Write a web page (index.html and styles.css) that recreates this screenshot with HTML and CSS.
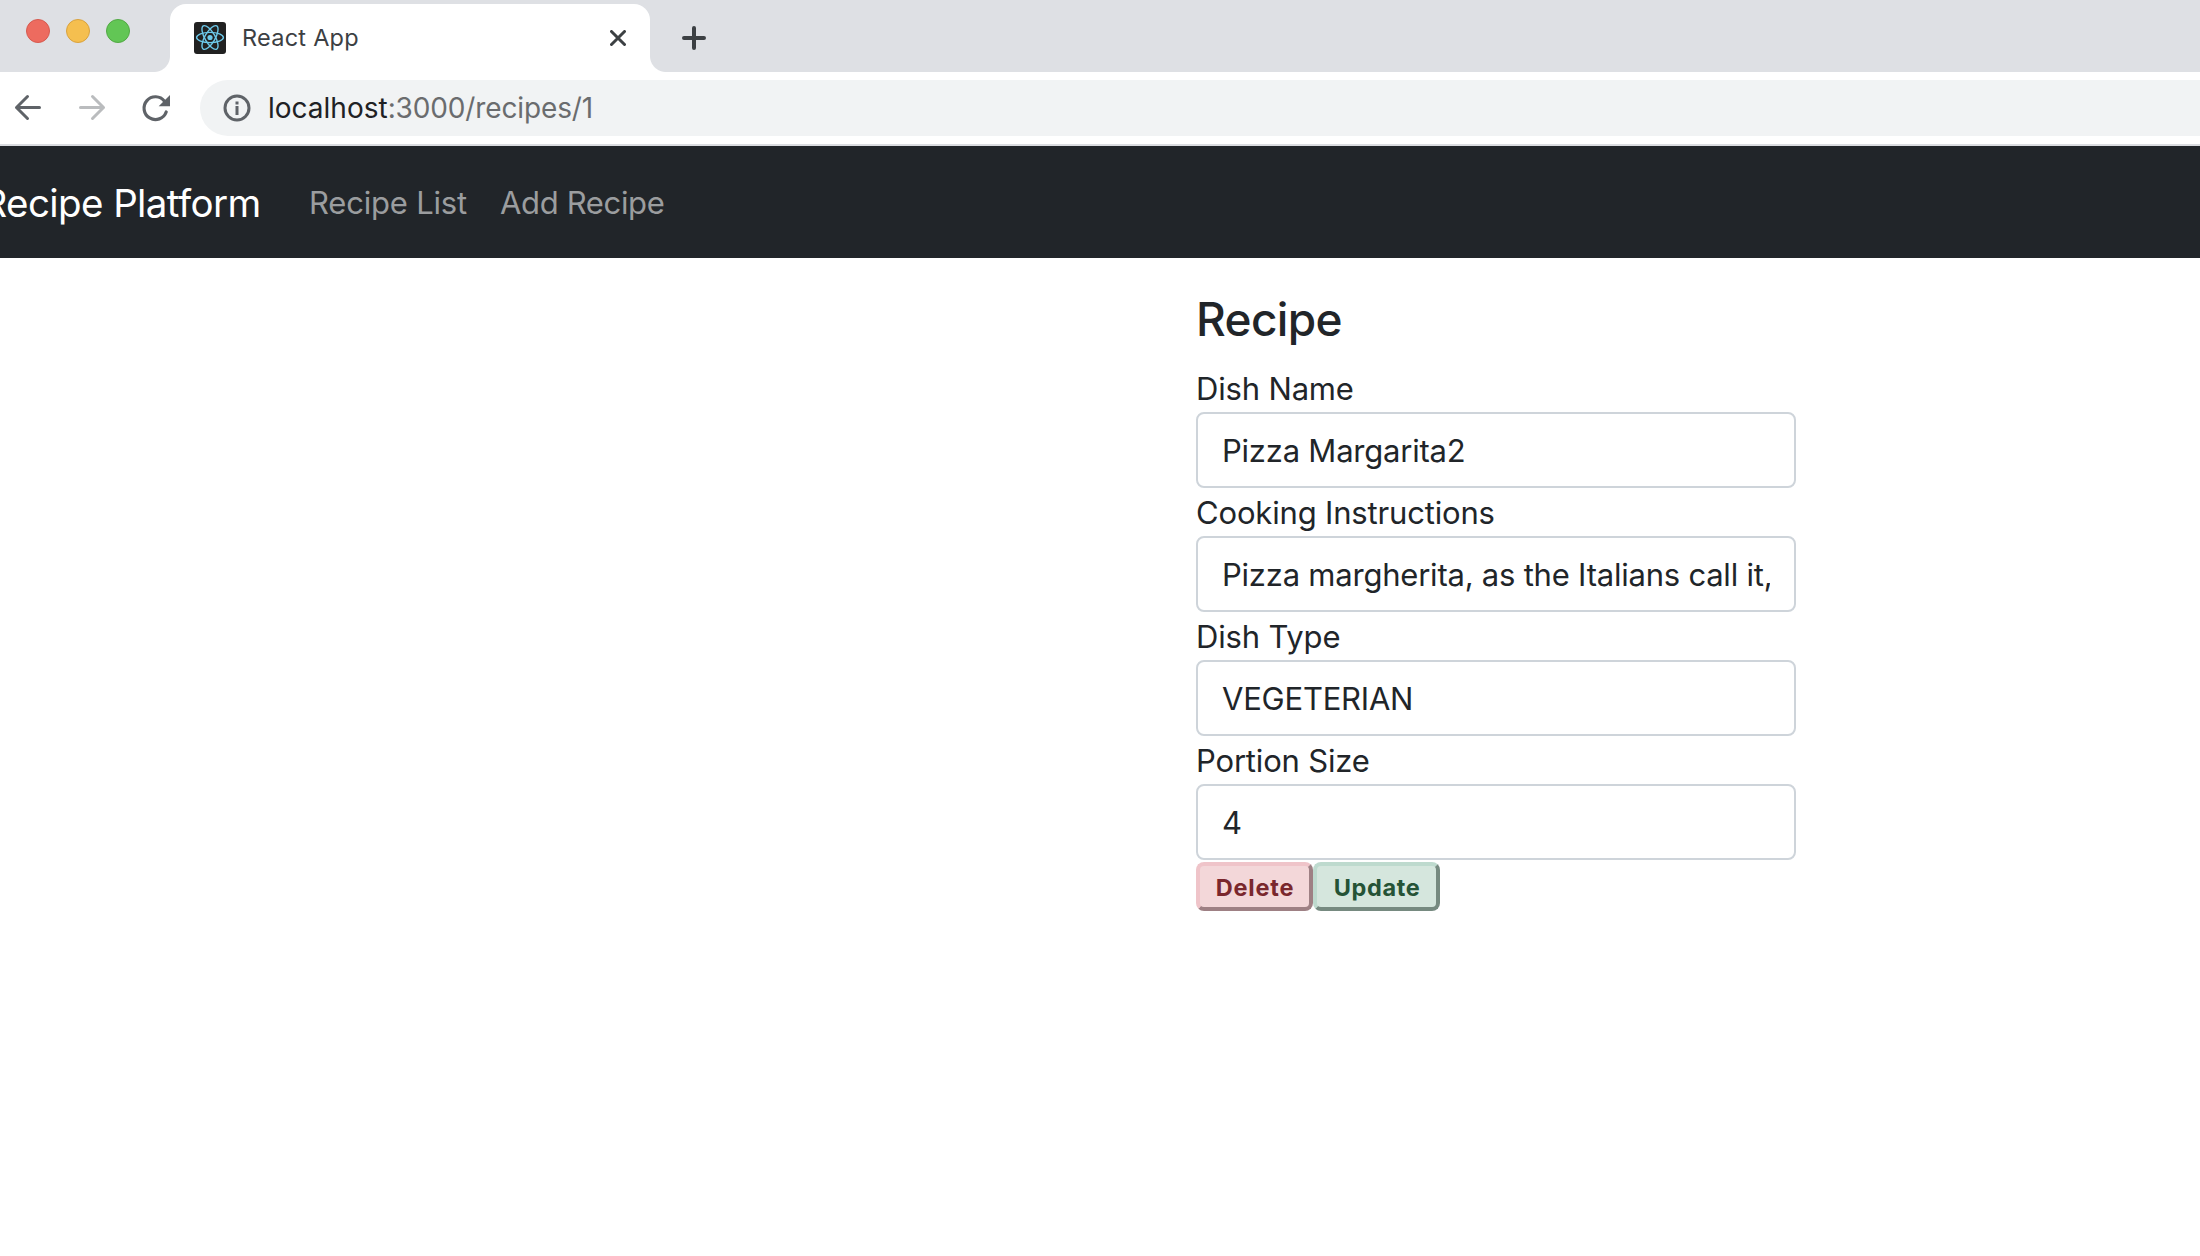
FILE: index.html
```html
<!DOCTYPE html>
<html lang="en">
<head>
<meta charset="utf-8">
<title>React App</title>
<link rel="stylesheet" href="styles.css">
</head>
<body>
<div class="tab-strip">
  <div class="lights"><span class="light red"></span><span class="light yellow"></span><span class="light green"></span></div>
  <div class="tab">
    <svg class="favicon" width="32" height="32" viewBox="0 0 32 32">
      <rect width="32" height="32" rx="3" fill="#212121"/>
      <g fill="none" stroke="#6cc9ea" stroke-width="1.4" transform="translate(16 15.5)">
        <ellipse rx="13.4" ry="5.1"/><ellipse rx="13.4" ry="5.1" transform="rotate(60)"/><ellipse rx="13.4" ry="5.1" transform="rotate(120)"/>
        <circle r="2.6" fill="#6cc9ea" stroke="none"/>
      </g>
    </svg>
    <span class="tab-title">React App</span>
    <svg class="close" width="16" height="16" viewBox="0 0 16 16"><path d="M1.5 1.5l13 13M14.5 1.5l-13 13" stroke="#3c4043" stroke-width="3" stroke-linecap="round"/></svg>
  </div>
  <svg class="plus" width="24" height="24" viewBox="0 0 24 24"><path d="M12 2v20M2 12h20" stroke="#3c4043" stroke-width="4" stroke-linecap="round"/></svg>
</div>
<div class="toolbar">
  <svg class="nav-icons" width="172" height="56" viewBox="0 80 172 56" fill="none" stroke-width="3" stroke-linecap="round" stroke-linejoin="round">
    <path d="M39.5 107.5H16.5M27.5 96.5l-11 11 11 11" stroke="#5f6368"/>
    <path d="M80.5 107.5H103.5M92.5 96.5l11 11-11 11" stroke="#babcbe"/>
    <path d="M164.5 101.2A11.4 11.4 0 1 0 166.2 112" stroke="#5f6368" stroke-width="3.2"/>
    <path d="M170 95v11.3h-11.3z" fill="#5f6368"/>
  </svg>
  <div class="address">
    <svg width="28" height="28" viewBox="0 0 28 28"><circle cx="14" cy="14" r="12" fill="none" stroke="#5f6368" stroke-width="3"/><path d="M14 12v9M14 7.5v3" stroke="#5f6368" stroke-width="3"/></svg>
    <span class="url"><span class="host">localhost</span>:3000/recipes/1</span>
  </div>
</div>
<nav class="navbar">
  <a class="brand">Recipe Platform</a>
  <a class="link">Recipe List</a>
  <a class="link add">Add Recipe</a>
</nav>
<main class="page">
  <form class="form">
    <h3 class="heading">Recipe</h3>
    <label class="label" for="name">Dish Name</label>
    <input class="field" id="name" value="Pizza Margarita2">
    <label class="label" for="cook">Cooking Instructions</label>
    <input class="field" id="cook" value="Pizza margherita, as the Italians call it,">
    <label class="label" for="type">Dish Type</label>
    <input class="field" id="type" value="VEGETERIAN">
    <label class="label" for="size">Portion Size</label>
    <input class="field" id="size" value="4">
    <div class="actions">
      <button class="btn delete" type="button">Delete</button><button class="btn update" type="button">Update</button>
    </div>
  </form>
</main>
</body>
</html>
```
FILE: styles.css
```css
* { box-sizing: border-box; }
html { overflow: hidden; }
body { margin: 0; height: 1256px; background: #fff; color: #212529; font-family: Inter, "Liberation Sans", sans-serif; overflow: hidden; }
svg { display: block; flex: none; }

.tab-strip { height: 72px; padding-top: 4px; background: #dee0e4; display: flex; }
.lights { width: 170px; padding: 15px 0 0 26px; display: flex; gap: 16px; flex: none; }
.light { width: 24px; height: 24px; border-radius: 50%; border: 1px solid; }
.red { background: #ed6b5f; border-color: #d65a4f; }
.yellow { background: #f5bf4f; border-color: #d9a23e; }
.green { background: #62c655; border-color: #52a944; }
.tab { position: relative; width: 480px; height: 68px; padding: 0 24px; background: #fff; border-radius: 16px 16px 0 0; display: flex; align-items: center; flex: none; }
.tab::before, .tab::after { content: ""; position: absolute; bottom: 0; width: 16px; height: 16px; }
.tab::before { left: -16px; background: radial-gradient(circle at 0 0, transparent 15.5px, #fff 16.5px); }
.tab::after { right: -16px; background: radial-gradient(circle at 100% 0, transparent 15.5px, #fff 16.5px); }
.tab-title { margin-left: 16px; padding-bottom: 2px; font-size: 23.5px; letter-spacing: .25px; color: #3c4043; }
.close { margin-left: auto; }
.plus { margin: 22px 0 0 32px; }

.toolbar { height: 74px; padding-top: 8px; border-bottom: 2px solid #dadce0; background: #fff; display: flex; }
.address { flex: 1; margin-left: 28px; height: 56px; padding-left: 22.5px; background: #f1f3f4; border-radius: 28px 0 0 28px; display: flex; align-items: center; }
.url { margin-left: 17.5px; font-size: 28px; letter-spacing: -.13px; color: #6a6c6e; }
.host { color: #202124; letter-spacing: 0; }

.navbar { height: 112px; background: #212529; display: flex; align-items: flex-start; padding-top: 33px; white-space: nowrap; }
.brand { margin-left: -17.5px; width: 326.5px; font-size: 38.5px; line-height: 48px; letter-spacing: -.6px; color: #fff; }
.link { width: 191px; font-size: 31px; line-height: 48px; letter-spacing: -.2px; color: #9b9d9f; }
.add { letter-spacing: -.35px; }

.page { padding: 32px 0 0 1196px; }
.form { width: 600px; }
.heading { margin: 0 0 16px; font-size: 46px; line-height: 58px; font-weight: 500; letter-spacing: -.65px; }
.label { display: block; padding-top: 2px; font-size: 31px; line-height: 46px; letter-spacing: -.17px; }
.field { display: block; width: 600px; height: 76px; padding: 0 24px; border: 2px solid #ced4da; border-radius: 8px; background: #fff; color: #212529; font: 31px Inter, "Liberation Sans", sans-serif; letter-spacing: -.22px; outline: 0; }
.actions { display: flex; padding-top: 2px; }
.btn { height: 49px; padding: 2px 0 0 1px; border: 4px solid; border-radius: 8px; font: 700 23.5px Inter, "Liberation Sans", sans-serif; }
.delete { width: 117px; background: #f3d7d9; color: #7a272d; border-color: #efc4c9 #9e8084 #9e8084 #efc4c9; letter-spacing: .8px; }
.update { width: 127px; background: #d5e6dd; color: #255336; border-color: #bedace #768a80 #768a80 #bedace; letter-spacing: .65px; }
```
